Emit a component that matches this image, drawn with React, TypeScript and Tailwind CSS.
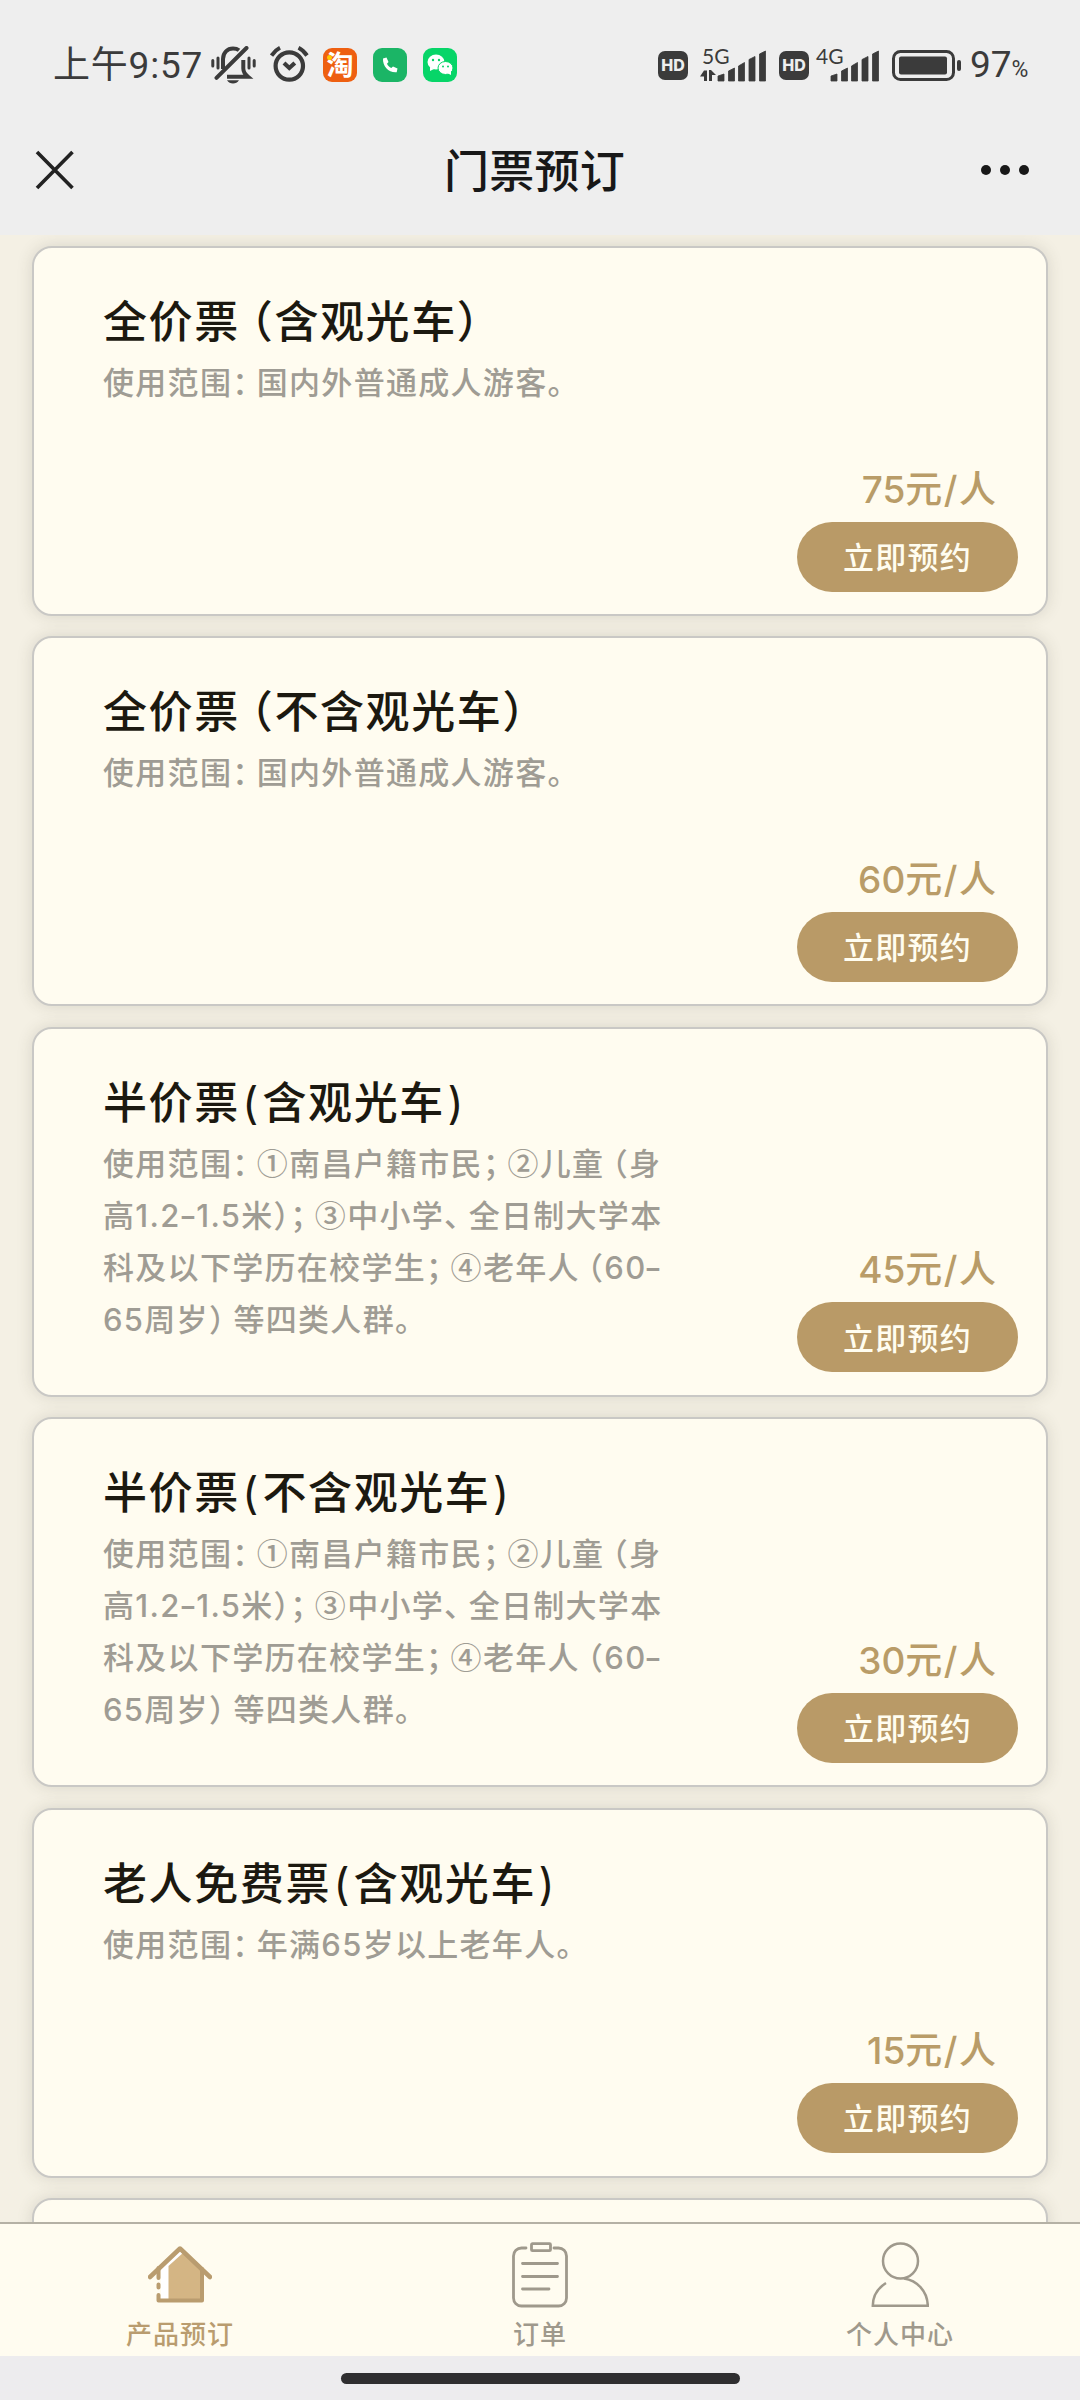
import React from 'react';
import clsx from 'clsx';

const tickets = [
  { name: '全价票（含观光车）', desc: '使用范围：国内外普通成人游客。', price: 75 },
  { name: '全价票（不含观光车）', desc: '使用范围：国内外普通成人游客。', price: 60 },
  {
    name: '半价票(含观光车)',
    desc: '使用范围：①南昌户籍市民；②儿童（身\n高1.2-1.5米）；③中小学、全日制大学本\n科及以下学历在校学生；④老年人（60-\n65周岁）等四类人群。',
    price: 45,
  },
  {
    name: '半价票(不含观光车)',
    desc: '使用范围：①南昌户籍市民；②儿童（身\n高1.2-1.5米）；③中小学、全日制大学本\n科及以下学历在校学生；④老年人（60-\n65周岁）等四类人群。',
    price: 30,
  },
  { name: '老人免费票(含观光车)', desc: '使用范围：年满65岁以上老年人。', price: 15 },
  { name: '', desc: '', price: 0 },
];

// full-width punctuation: half-width glyph plus a quarter em of padding
const Tight: React.FC<{ text: string }> = ({ text }) => (
  <>
    {text.split(/(）；|[（）：；、。①②③④()-])/).map((part, i) => {
      if (part === '（') return <span key={i} className="pl-[0.25em] leading-none [font-feature-settings:'halt']">{part}</span>;
      if (/^[）：；、。]+$/.test(part)) return <span key={i} className="pr-[0.25em] leading-none [font-feature-settings:'halt']">{part}</span>;
      if (/^[①②③④]$/.test(part)) return <span key={i} className="font-['Noto_Sans_CJK_SC'] leading-none">{part}</span>;
      if (/^[()]$/.test(part)) return <span key={i} className="px-[2.5px] font-normal leading-none">{part}</span>;
      if (part === '-') return <span key={i} className="inline-block scale-x-125 leading-none">{part}</span>;
      return part;
    })}
  </>
);

const BellOff = () => (
  <svg className="ml-2 h-[38px] w-[45px]" viewBox="0 0 45 38" fill="none" stroke="#3b3b3b" strokeWidth="4">
    <path d="M12 23V13C12 6.500 16.500 2.500 22 2.500c2.500 0 4.500.6 6 1.800" />
    <path d="M32.300 14v8.500c0 3.500 2 6 4.700 8.300H16" />
    <path d="M5.500 31.800L35.500 2" strokeWidth="4" strokeLinecap="round" />
    <path d="M16 34.300h12c-1.500 2.200-3.500 3.200-6 3.200s-4.500-1-6-3.200z" fill="#3b3b3b" stroke="none" />
    <path d="M1.800 14.500v5.500M7 12v10M38 12v10M43.200 14.500v5.500" strokeWidth="3" strokeLinecap="round" />
  </svg>
);

const Alarm = () => (
  <svg className="ml-[14px] h-[38px] w-[39px]" viewBox="0 0 39 38" fill="none" stroke="#3b3b3b" strokeWidth="4.200">
    <circle cx="19.300" cy="20" r="13.700" />
    <path d="M14 17l5.300 5 5.500-5" />
    <path d="M1.500 9.500C4 6 6.500 3.500 10 1.800M37 9.500C34.500 6 32 3.500 28.500 1.800" strokeWidth="4" />
  </svg>
);

const Signal: React.FC<{ label: string; data?: boolean }> = ({ label, data }) => (
  <svg className={clsx('h-[34px] shrink-0 overflow-visible', data ? 'ml-3 w-[66px]' : 'ml-[7px] w-[63px]')} viewBox={data ? '0 0 66 34' : '3 0 63 34'} fill="#3b3b3b">
    <text x={data ? 2 : 3} y="16" fontSize="21" className="font-['Lato']">{label}</text>
    {data && <path d="M4 22.500h3V33H4v-4.500H0zM9 33h3v-6h4l-5-5H9z" />}
    <path d="M18 33v-5l6-2v7zM28.500 33V23l6-3v13zM38.500 33V18l6-3.500V33zM49 33V11.500l6-3V33zM59.500 33V6l6-3v30z" stroke="#3b3b3b" strokeWidth=".8" strokeLinejoin="round" />
  </svg>
);

const Hd = ({ className = '' }) => (
  <span className={clsx("flex h-[29px] w-[30px] shrink-0 items-center justify-center rounded-[7px] bg-[#3b3b3b] font-['Inter'] text-[16px] font-extrabold leading-none text-[#eee]", className)}>
    HD
  </span>
);

const House = () => (
  <svg className="h-[66px] w-16" viewBox="0 -4 64 66" fill="none">
    <path d="M13 54V23L33 4l3 2v48z" fill="#fff" />
    <path d="M20.500 55V20L36 6l18 17v32z" fill="#d4b584" />
    <path d="M2 31L32 2.500 62 31" stroke="#b99c6f" strokeWidth="4.500" strokeLinecap="round" strokeLinejoin="round" />
    <path d="M10.500 22v10M10.500 38.500v3M10.500 49v5.500H54V23" stroke="#b99c6f" strokeWidth="4" strokeLinecap="round" strokeLinejoin="round" />
  </svg>
);

const Clipboard = () => (
  <svg className="h-[66px] w-[58px]" viewBox="0 0 58 66" fill="none" stroke="#9f998c" strokeWidth="2.800" strokeLinecap="round">
    <path d="M15 6h-4.500a8 8 0 0 0-8 8v42a8 8 0 0 0 8 8h37a8 8 0 0 0 8-8V14a8 8 0 0 0-8-8H43" />
    <rect x="20.500" y="1.700" width="19" height="7" rx="1" />
    <path d="M11.500 21.500h35M11.500 34.500h35M11.500 47h26.500" />
  </svg>
);

const Person = () => (
  <svg className="h-[66px] w-[58px]" viewBox="0 0 58 66" fill="none" stroke="#9f998c" strokeWidth="2.500">
    <circle cx="29.500" cy="19" r="17.500" />
    <path d="M15 41C7 46 1.800 54 1.800 63.800h55C56.500 49 46 38.500 33 36.500" />
  </svg>
);

const App: React.FC = () => {
  return (
    <div className="flex h-[2400px] w-[1080px] flex-col overflow-hidden bg-[#f4f0e4] font-['Inter','Noto_Sans_CJK_SC',sans-serif] [text-spacing-trim:space-all]">
      {/* status bar + title */}
      <div className="h-[235px] shrink-0 bg-[#eeeeee]">
        <div className="flex h-[130px] items-center pl-[53px] text-[#3b3b3b]">
          <div className="w-[150px] shrink-0 whitespace-nowrap pt-[2px] font-['Roboto','Noto_Sans_CJK_SC',sans-serif] text-[37px] tracking-[0.8px]">上午9:57</div>
          <BellOff />
          <Alarm />
          <span className="relative ml-[14px] flex h-[34px] w-[34px] items-center justify-center rounded-[9px] bg-[#ee5f10] text-[27px] font-bold leading-none text-white">
            淘
            <i className="absolute left-1 top-[7px] h-[5px] w-[5px] rounded-full bg-[#ffc800]" />
          </span>
          <span className="ml-4 flex h-[34px] w-[34px] items-center justify-center rounded-[9px] bg-[#1bb566]">
            <svg className="h-4 w-4" viewBox="0 0 16 16" fill="#fff">
              <path d="M1 1.500L4.500.500 6.500 5 5 6.800c1 2 2.300 3.300 4.300 4.300L11 9.500l4.500 2-.8 3.700C7 16 .500 9.500 1 1.500z" />
            </svg>
          </span>
          <span className="ml-4 flex h-[34px] w-[34px] items-center justify-center rounded-[9px] bg-[#07d568]">
            <svg className="h-[34px] w-[34px]" viewBox="0 0 34 34" fill="#fff">
              <ellipse cx="13" cy="14" rx="8.500" ry="7.500" />
              <path d="M7 19v4l4-2z" />
              <ellipse cx="22.500" cy="20" rx="7.500" ry="6.500" stroke="#07d568" />
              <path d="M24 25l4 2v-4z" />
              <g fill="#07d568">
                <circle cx="10" cy="12" r="1.200" /><circle cx="16" cy="12" r="1.200" />
                <circle cx="20" cy="18.500" r="1" /><circle cx="25" cy="18.500" r="1" />
              </g>
            </svg>
          </span>
          <Hd className="ml-[201px]" />
          <Signal label="5G" data />
          <Hd className="ml-[13px]" />
          <Signal label="4G" />
          <svg className="ml-[13px] h-[31px] w-[70px] shrink-0" viewBox="0 0 70 31" fill="#3b3b3b">
            <rect x="1.500" y="1.500" width="60" height="28" rx="7" fill="none" stroke="#3b3b3b" strokeWidth="3" />
            <rect x="7" y="6.500" width="48" height="18" rx="2" />
            <rect x="65" y="10" width="4" height="11" rx="2" />
          </svg>
          <div className="ml-2 whitespace-nowrap font-['Roboto'] text-[37px]">97<span className="text-[23px]">%</span></div>
        </div>
        <div className="flex h-20 items-center justify-between pl-[35px] pr-[51px]">
          <svg className="h-10 w-10" viewBox="0 0 40 40" stroke="#222" strokeWidth="3.600">
            <path d="M2 2l35.500 36M37.500 2L2 38" />
          </svg>
          <h1 className="pl-[13px] pt-[3px] text-[45px] font-medium tracking-[0.3px] text-[#181818]">门票预订</h1>
          <div className="flex gap-[9px]">
            <i className="h-[10px] w-[10px] rounded-full bg-[#181818]" />
            <i className="h-[10px] w-[10px] rounded-full bg-[#181818]" />
            <i className="h-[10px] w-[10px] rounded-full bg-[#181818]" />
          </div>
        </div>
      </div>

      {/* ticket list */}
      <div className="flex min-h-0 flex-1 flex-col gap-[20.4px] overflow-hidden px-8 pt-[11px]">
        {tickets.map((ticket, i) => (
          <div key={i} className="flex h-[370px] shrink-0 justify-between rounded-[20px] border-2 border-[#c9c8c5] bg-[#fffcf0] pl-[69px] pr-7 shadow-[0_0_16px_rgba(60,60,50,0.15)]">
            {ticket.name && (
              <>
                <div className="pt-[44px]">
                  <h2 className="whitespace-nowrap text-[44px] font-medium leading-[60px] tracking-[1.6px] text-[#1c1910]">
                    <Tight text={ticket.name} />
                  </h2>
                  <p className="mt-[5px] whitespace-pre text-[31px] font-medium leading-[52px] tracking-[1.3px] text-[#9f9c94]">
                    <Tight text={ticket.desc} />
                  </p>
                </div>
                <div className="flex flex-col items-end justify-end pb-[22.5px]">
                  <div className="mb-1 mr-[22px] text-[37px] font-medium leading-[56px] text-[#b99c68]">
                    {ticket.price}元<span className="px-[1.5px]">/</span>人
                  </div>
                  <button className="h-[70px] w-[221px] rounded-full bg-[#b99a67] pt-[3px] text-[31px] font-medium tracking-[1.3px] text-[#fffdf0]">
                    立即预约
                  </button>
                </div>
              </>
            )}
          </div>
        ))}
      </div>

      {/* tab bar */}
      <div className="grid h-[134px] shrink-0 grid-cols-3 border-t-2 border-[#b5b1a5] bg-[#fffcf0] text-[26px] leading-[36px] tracking-[1px] text-[#9f998c]">
        <div className="flex flex-col items-center pt-[18px] text-[#b99c6f]">
          <House />
          <span className="mt-[9px] font-medium">产品预订</span>
        </div>
        <div className="flex flex-col items-center pt-[18px]">
          <Clipboard />
          <span className="mt-[9px] font-medium">订单</span>
        </div>
        <div className="flex flex-col items-center pt-[18px]">
          <Person />
          <span className="mt-[9px] font-medium">个人中心</span>
        </div>
      </div>
      <div className="flex h-11 shrink-0 justify-center bg-[#edecee] pt-[17px]">
        <div className="h-[11px] w-[399px] rounded-full bg-[#2f2e30]" />
      </div>
    </div>
  );
};

export default App;
